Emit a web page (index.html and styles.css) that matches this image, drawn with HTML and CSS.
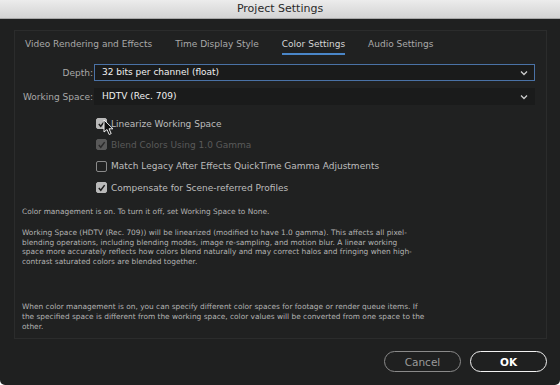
FILE: index.html
```html
<!DOCTYPE html>
<html lang="en">

<head>
    <meta charset="UTF-8">
    <title>Project Settings</title>
    <link rel="stylesheet" href="styles.css">
</head>

<body>
    <div class="window">
        <div class="titlebar">Project Settings</div>
        <div class="content">
            <div class="panel">
                <!-- tabs -->
                <ul class="tabs">
                    <li class="tab">Video Rendering and Effects</li>
                    <li class="tab">Time Display Style</li>
                    <li class="tab active">Color Settings</li>
                    <li class="tab">Audio Settings</li>
                </ul>

                <div class="row">
                    <label class="label">Depth:</label>
                    <div class="select focus">32 bits per channel (float)
                        <svg class="chev" width="8" height="6" viewBox="0 0 8 6"><path d="M1 1.5 L4 4.5 L7 1.5" fill="none" stroke="#ccc" stroke-width="1.3"/></svg>
                    </div>
                </div>
                <div class="row">
                    <label class="label">Working Space:</label>
                    <div class="select">HDTV (Rec. 709)
                        <svg class="chev" width="8" height="6" viewBox="0 0 8 6"><path d="M1 1.5 L4 4.5 L7 1.5" fill="none" stroke="#ccc" stroke-width="1.3"/></svg>
                    </div>
                </div>

                <ul class="checks">
                    <li class="check on">
                        <span class="box"><svg width="10" height="10" viewBox="0 0 10 10"><path d="M2 5 L4.2 7.5 L8.5 1.8" fill="none" stroke="#1d1d1d" stroke-width="1.6"/></svg></span>
                        Linearize Working Space
                        <svg class="cursor" width="12" height="17" viewBox="0 0 12 17"><path d="M1 1 L1 13 L4 10.5 L6.2 15.5 L8.2 14.6 L6 9.8 L10 9.8 Z" fill="#111" stroke="#eee" stroke-width="1"/></svg>
                    </li>
                    <li class="check on disabled">
                        <span class="box"><svg width="10" height="10" viewBox="0 0 10 10"><path d="M2 5 L4.2 7.5 L8.5 1.8" fill="none" stroke="#2a2a2a" stroke-width="1.6"/></svg></span>
                        Blend Colors Using 1.0 Gamma
                    </li>
                    <li class="check">
                        <span class="box"></span>
                        Match Legacy After Effects QuickTime Gamma Adjustments
                    </li>
                    <li class="check on">
                        <span class="box"><svg width="10" height="10" viewBox="0 0 10 10"><path d="M2 5 L4.2 7.5 L8.5 1.8" fill="none" stroke="#1d1d1d" stroke-width="1.6"/></svg></span>
                        Compensate for Scene-referred Profiles
                    </li>
                </ul>

                <p class="note">Color management is on. To turn it off, set Working Space to None.</p>
                <p class="note desc">Working Space (HDTV (Rec. 709)) will be linearized (modified to have 1.0 gamma). This affects all pixel-<br>blending operations, including blending modes, image re-sampling, and motion blur. A linear working<br>space more accurately reflects how colors blend naturally and may correct halos and fringing when high-<br>contrast saturated colors are blended together.</p>
                <p class="note bottom">When color management is on, you can specify different color spaces for footage or render queue items. If<br>the specified space is different from the working space, color values will be converted from one space to the<br>other.</p>
            </div>

            <div class="buttons">
                <button type="button" class="btn">Cancel</button>
                <button type="button" class="btn ok">OK</button>
            </div>
        </div>
    </div>
</body>

</html>
```

FILE: styles.css
```css
* {
    margin: 0;
    padding: 0;
}

body {
    background: #fff;
    font-family: "DejaVu Sans", "Liberation Sans", sans-serif;
}

.window {
    width: 560px;
    height: 385px;
    background: #1f2020;
    border-radius: 0 0 5px 5px;
    overflow: hidden;
}

.titlebar {
    height: 18px;
    line-height: 18px;
    text-align: center;
    font-size: 11px;
    color: #2a2a2a;
    background: linear-gradient(#ececec, #d3d3d3);
    border-bottom: 1px solid #a8a8a8;
}

.content {
    padding: 11px 13px 0 14px;
}

.panel {
    height: 309px;
    border: 1px solid #2b2c2c;
    background: #202121;
    box-sizing: border-box;
}

/* 标签栏 */
.tabs {
    list-style: none;
    display: flex;
    gap: 23px;
    padding: 8px 0 0 10px;
    height: 23px;
    box-sizing: border-box;
}

.tab {
    font-size: 9px;
    color: #a9a9a9;
    height: 14px;
}

.tab.active {
    color: #d6d6d6;
    border-bottom: 2px solid #4a86c8;
}

.row {
    display: flex;
    align-items: center;
    margin-top: 10px;
}

.row + .row {
    margin-top: 7px;
}

.label {
    width: 78px;
    text-align: right;
    font-size: 9px;
    color: #a9a9a9;
    padding-right: 1px;
}

.select {
    position: relative;
    width: 441px;
    height: 17px;
    line-height: 15px;
    box-sizing: border-box;
    padding-left: 7px;
    background: #1a1b1b;
    font-size: 9px;
    color: #f0f0f0;
    border: 1px solid #1a1b1b;
}

.select.focus {
    border-color: #4a72a6;
}

.chev {
    position: absolute;
    right: 6px;
    top: 5px;
}

.checks {
    list-style: none;
    padding: 8px 0 0 81px;
}

.check {
    position: relative;
    display: flex;
    align-items: center;
    height: 21.3px;
    font-size: 9px;
    color: #bdbdbd;
}

.box {
    width: 11px;
    height: 11px;
    margin-right: 4px;
    border: 1px solid #8a8a8a;
    border-radius: 2px;
    box-sizing: border-box;
    display: flex;
    align-items: center;
    justify-content: center;
}

.check.on .box {
    background: #b9b9b9;
    border-color: #b9b9b9;
}

.check.disabled {
    color: #5a5a5a;
}

.check.disabled .box {
    background: #595959;
    border-color: #595959;
}

.cursor {
    position: absolute;
    left: 7px;
    top: 6px;
}

.note {
    font-size: 7.4px;
    color: #b3b3b3;
    padding-left: 7px;
    line-height: 9.7px;
}

.checks + .note {
    margin-top: 9px;
}

.desc {
    margin-top: 11px;
}

.bottom {
    margin-top: 35px;
    line-height: 10px;
}

.buttons {
    display: flex;
    justify-content: flex-end;
    gap: 9px;
    padding-top: 12px;
}

.btn {
    width: 77px;
    height: 21px;
    border-radius: 11px;
    background: #1f2020;
    border: 1.5px solid #8a8a8a;
    color: #9a9a9a;
    font-family: "DejaVu Sans", sans-serif;
    font-size: 10.5px;
}

.btn.ok {
    border-color: #f2f2f2;
    color: #fff;
    font-weight: bold;
}
```
